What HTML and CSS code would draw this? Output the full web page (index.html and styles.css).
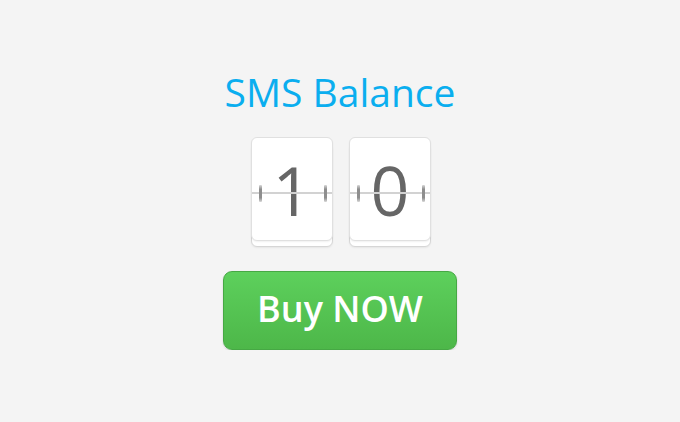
FILE: index.html
```html
<!DOCTYPE html>
<html>
<head>
<meta charset="utf-8">
<link rel="stylesheet" href="styles.css">
</head>
<body>
<main class="widget">
  <h1 class="title">SMS Balance</h1>
  <div class="counter">
    <div class="flip">
      <div class="sheet"></div>
      <div class="card"><span class="digit">1</span><i class="line"></i><i class="tick tick-l"></i><i class="tick tick-r"></i></div>
    </div>
    <div class="flip">
      <div class="sheet"></div>
      <div class="card"><span class="digit">0</span><i class="line"></i><i class="tick tick-l"></i><i class="tick tick-r"></i></div>
    </div>
  </div>
  <button class="buy">Buy NOW</button>
</main>
</body>
</html>
```
FILE: styles.css
```css
html, body {
  margin: 0;
  padding: 0;
  background: #f4f4f4;
}
body {
  font-family: "Open Sans", "Noto Sans", sans-serif;
}
.widget {
  display: flex;
  flex-direction: column;
  align-items: center;
  padding-top: 65px;
}
.title {
  margin: 0;
  font-size: 39px;
  line-height: 53px;
  font-weight: 400;
  color: #0aaeef;
}
.counter {
  display: flex;
  gap: 16px;
  margin-top: 19px;
  margin-left: 2px;
}
.flip {
  display: grid;
}
.sheet, .card {
  grid-area: 1 / 1;
  width: 80px;
  height: 102px;
  background: #fff;
  border: 1px solid #e0e0e0;
  border-radius: 6px;
}
.sheet {
  margin-top: 6px;
  border-color: #d6d6d6;
  box-shadow: 0 1px 2px rgba(0,0,0,0.06);
}
.card {
  position: relative;
  display: flex;
  align-items: center;
  justify-content: center;
  box-shadow: 0 1px 2px rgba(0,0,0,0.06);
}
.line {
  position: absolute;
  left: 0;
  right: 0;
  top: 54px;
  height: 2px;
  background: #d2d2d2;
}
.digit {
  font-size: 68px;
  line-height: 1;
  color: #666;
  font-weight: 400;
  position: relative;
  top: 1px;
}
.tick {
  position: absolute;
  top: 47px;
  width: 3px;
  height: 17px;
  border-radius: 1px;
  background: linear-gradient(to bottom, rgba(140,140,140,0.35), #8e8e8e 25%, #8e8e8e 75%, rgba(140,140,140,0.35));
}
.tick-l { left: 7px; }
.tick-r { right: 5px; }
.buy {
  margin-top: 24px;
  width: 234px;
  height: 79px;
  border: 1px solid #46a844;
  border-radius: 9px;
  background: linear-gradient(to bottom, #5dd05c, #4db749);
  color: #fff;
  font-family: "Open Sans", "Noto Sans", sans-serif;
  font-size: 36px;
  font-weight: 600;
  box-shadow: 0 1px 2px rgba(0,0,0,0.15);
  padding: 0 0 4px 0;
  cursor: pointer;
}
```
